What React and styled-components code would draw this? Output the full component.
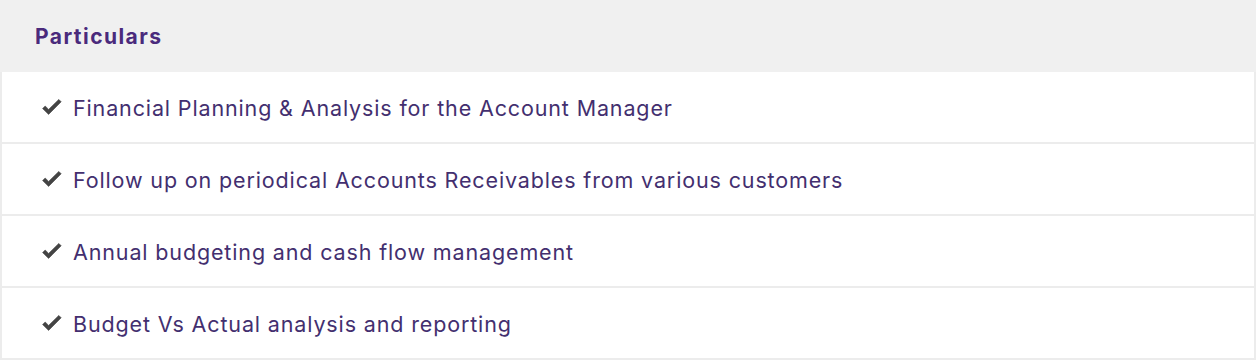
import React from "react";
import styled, { createGlobalStyle } from "styled-components";

const Global = createGlobalStyle`
  html, body { margin: 0; padding: 0; background: #ffffff; }
  body { font-family: Inter, "Open Sans", sans-serif; }
`;

const Table = styled.div`
  width: 1256px;
  display: flex;
  flex-direction: column;
  box-sizing: border-box;
`;

const HeaderRow = styled.div`
  height: 72px;
  background: #f0f0f0;
  display: flex;
  align-items: center;
  padding-left: 35px;
  box-sizing: border-box;
`;

const HeaderText = styled.span`
  font-family: Inter, sans-serif;
  font-weight: 700;
  font-size: 21px;
  color: #4a2a7c;
  letter-spacing: 1.45px;
`;

const Row = styled.div`
  height: 72px;
  display: flex;
  align-items: center;
  box-sizing: border-box;
  border-left: 2px solid #ececec;
  border-right: 2px solid #ececec;
  border-bottom: 2px solid #ececec;
  padding-left: 40px;
  padding-top: 1px;
`;

const Check = styled.svg`
  width: 20px;
  height: 16px;
  margin-right: 11px;
  margin-top: -1px;
  flex: none;
`;

const ItemText = styled.span`
  font-family: Inter, sans-serif;
  font-size: 21.5px;
  color: #432f6f;
  font-weight: 400;
  letter-spacing: 0.86px;
`;

const CheckIcon = () => (
  <Check viewBox="0 0 20 16">
    <path
      d="M0.6 9.6 L3.2 7 L6.6 10.4 L16.8 0.4 L19.2 2.8 L6.6 15.4 Z"
      fill="#444444"
      stroke="#444444"
      strokeWidth="0.6"
      strokeLinejoin="round"
    />
  </Check>
);

const items = [
  "Financial Planning & Analysis for the Account Manager",
  "Follow up on periodical Accounts Receivables from various customers",
  "Annual budgeting and cash flow management",
  "Budget Vs Actual analysis and reporting",
];

export default function App() {
  return (
    <>
      <Global />
      <Table>
        <HeaderRow>
          <HeaderText>Particulars</HeaderText>
        </HeaderRow>
        {items.map((t) => (
          <Row key={t}>
            <CheckIcon />
            <ItemText>{t}</ItemText>
          </Row>
        ))}
      </Table>
    </>
  );
}
